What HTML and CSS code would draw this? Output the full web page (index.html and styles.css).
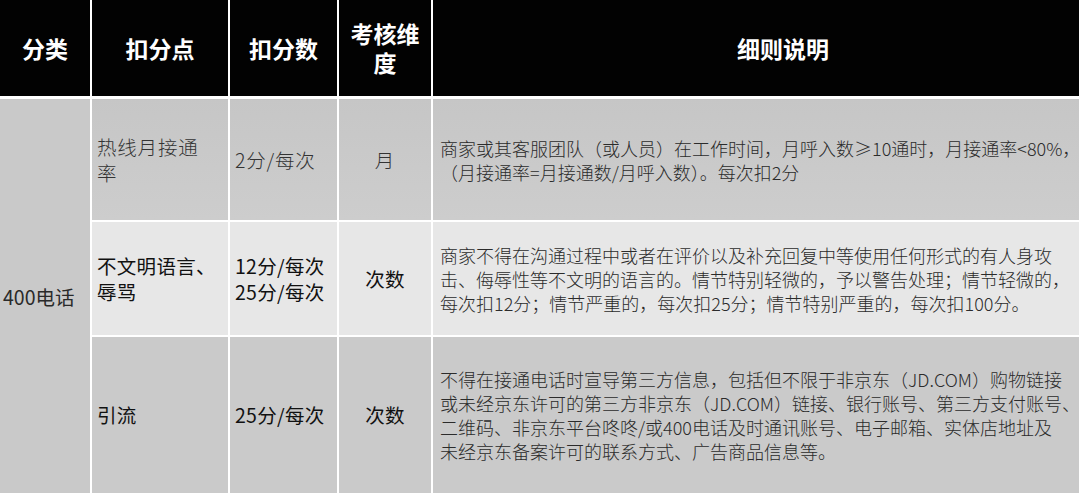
FILE: index.html
```html
<!DOCTYPE html>
<html lang="zh-CN">
<head>
<meta charset="utf-8">
<title>400电话 扣分规则</title>
<link rel="stylesheet" href="styles.css">
</head>
<body>
<div class="table">
  <div class="th c0">分类</div>
  <div class="th">扣分点</div>
  <div class="th">扣分数</div>
  <div class="th narrow">考核维<br>度</div>
  <div class="th">细则说明</div>

  <div class="cat">400电话</div>

  <div class="cell r1 left serif">热线月接通<br>率</div>
  <div class="cell r1 left serif">2分/每次</div>
  <div class="cell r1 center serif">月</div>
  <div class="cell r1 desc">商家或其客服团队（或人员）在工作时间，月呼入数≥10通时，月接通率&lt;80%，<br>（月接通率=月接通数/月呼入数）。每次扣2分</div>

  <div class="cell r2 left sans">不文明语言、<br>辱骂</div>
  <div class="cell r2 left sans">12分/每次<br>25分/每次</div>
  <div class="cell r2 center sans">次数</div>
  <div class="cell r2 desc">商家不得在沟通过程中或者在评价以及补充回复中等使用任何形式的有人身攻<br>击、侮辱性等不文明的语言的。情节特别轻微的，予以警告处理；情节轻微的，<br>每次扣12分；情节严重的，每次扣25分；情节特别严重的，每次扣100分。</div>

  <div class="cell r3 left sans">引流</div>
  <div class="cell r3 left sans">25分/每次</div>
  <div class="cell r3 center sans">次数</div>
  <div class="cell r3 desc">不得在接通电话时宣导第三方信息，包括但不限于非京东（JD.COM）购物链接<br>或未经京东许可的第三方非京东（JD.COM）链接、银行账号、第三方支付账号、<br>二维码、非京东平台咚咚/或400电话及时通讯账号、电子邮箱、实体店地址及<br>未经京东备案许可的联系方式、广告商品信息等。</div>
</div>
</body>
</html>
```

FILE: styles.css
```css
html, body {
  margin: 0;
  padding: 0;
  background: #ffffff;
}
body {
  width: 1079px;
  height: 493px;
  overflow: hidden;
  font-family: "Noto Sans CJK SC", "Liberation Sans", sans-serif;
}
.table {
  display: grid;
  grid-template-columns: 90px 136px 107px 92px 700px;
  grid-template-rows: 97px 121px 113px 160px;
  column-gap: 2px;
  row-gap: 2px;
  background: #ffffff;
  width: 1131px;
}
.th {
  background: #020202;
  color: #ffffff;
  font-weight: 700;
  font-size: 23px;
  line-height: 29px;
  display: flex;
  align-items: center;
  justify-content: center;
  text-align: center;
  margin-bottom: 1px;
}
.th:last-of-type {
  justify-content: flex-start;
  padding-left: 277px;
}
.cat {
  grid-column: 1;
  grid-row: 2 / 5;
  background: #c9c9c9;
  color: #2a2a2a;
  font-size: 19.5px;
  display: flex;
  align-items: center;
  padding-left: 3px;
  padding-bottom: 4px;
}
.cell {
  display: flex;
  align-items: center;
  color: #262626;
}
.r1 { background: linear-gradient(#c6c6c6, #cdcdcd); }
.r2 { background: #e7e7e7; }
.r3 { background: #cacaca; padding-bottom: 4px; }
.left {
  padding-left: 5px;
  justify-content: flex-start;
}
.center {
  justify-content: center;
  text-align: center;
}
.serif {
  font-size: 19.5px;
  line-height: 26px;
  font-weight: 300;
  color: #333333;
  letter-spacing: 0.8px;
}
.sans {
  font-size: 19.5px;
  line-height: 26px;
  color: #111111;
  letter-spacing: 0.3px;
}
.desc {
  padding-left: 7px;
  font-size: 18px;
  line-height: 24px;
  font-weight: 300;
  color: #2b2b2b;
  white-space: nowrap;
}
```
